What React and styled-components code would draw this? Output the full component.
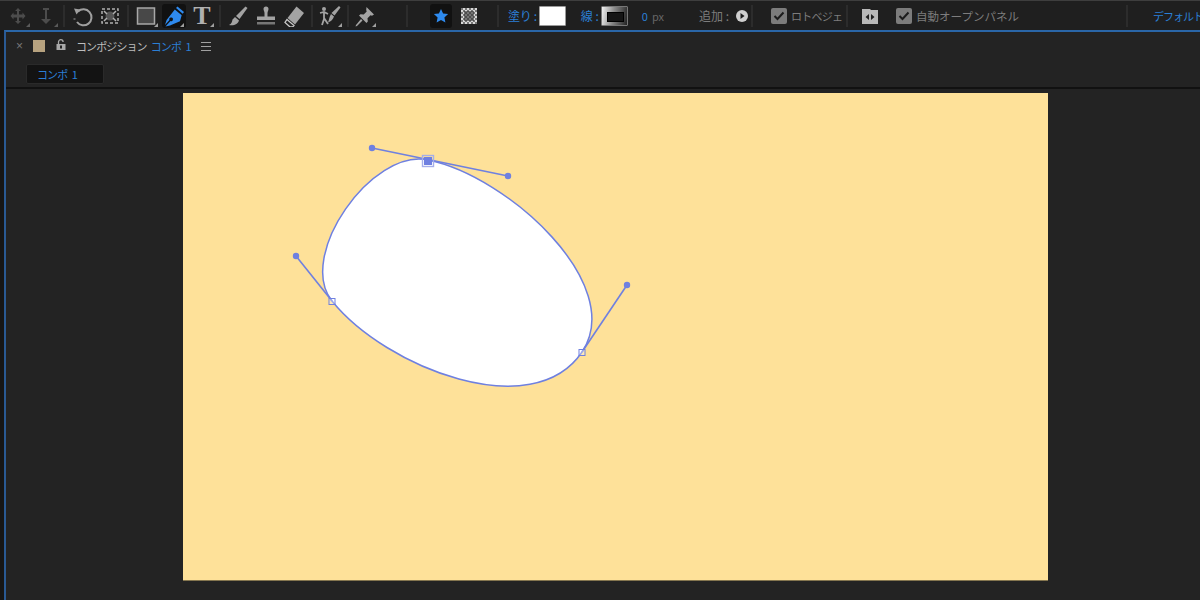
import React from "react";
import styled, { createGlobalStyle } from "styled-components";

const Global = createGlobalStyle`
  html, body { margin: 0; padding: 0; background: #232323; }
  * { box-sizing: border-box; }
`;

const FONT = `"Noto Sans CJK JP", "Noto Sans", sans-serif`;
const BLUE = "#2b7fd6";

const Root = styled.div`
  width: 1200px;
  height: 600px;
  overflow: hidden;
  display: flex;
  flex-direction: column;
  background: #161616;
  font-family: ${FONT};
  border-top: 1px solid #3e3e3e;
`;

const Toolbar = styled.div`
  height: 29px;
  flex: none;
  display: flex;
  align-items: center;
  padding-left: 4px;
  background: #1f1f1f;
  white-space: nowrap;
  overflow: hidden;
`;

const Tool = styled.div`
  position: relative;
  width: ${(p) => p.$w || 28}px;
  height: 24px;
  flex: none;
  display: flex;
  align-items: center;
  justify-content: center;
  margin-left: ${(p) => p.$ml || 0}px;
  color: ${(p) => p.$color || "#a3a3a3"};
  &::after {
    content: "";
    display: ${(p) => (p.$corner ? "block" : "none")};
    position: absolute;
    right: 2px;
    bottom: 1px;
    width: 0;
    height: 0;
    border-style: solid;
    border-width: 0 0 4px 4px;
    border-color: transparent transparent ${(p) => (p.$dim ? "#5a5a5a" : "#a0a0a0")} transparent;
  }
`;

const ActiveTool = styled(Tool)`
  background: #111;
  border-radius: 3px;
  width: ${(p) => p.$w || 24}px;
  margin-left: ${(p) => p.$ml || 2}px;
  margin-right: ${(p) => p.$mr || 2}px;
`;

const Sep = styled.div`
  width: ${(p) => p.$w || 8}px;
  height: 22px;
  flex: none;
  margin-left: ${(p) => p.$ml || 0}px;
  display: flex;
  justify-content: center;
  &::before {
    content: "";
    width: 2px;
    height: 100%;
    background: #2c2c2c;
  }
`;

const Label = styled.span`
  flex: none;
  font-size: ${(p) => p.$size || 12}px;
  line-height: 16px;
  color: ${(p) => p.$color || "#7d7d7d"};
  margin-left: ${(p) => p.$ml || 0}px;
  letter-spacing: ${(p) => p.$ls || 0}px;
`;

const TypeTool = styled.span`
  font-family: "Liberation Serif", serif;
  font-size: 26px;
  line-height: 24px;
  font-weight: 700;
  color: #b0b0b0;
`;

const FillSwatch = styled.div`
  width: 27px;
  height: 20px;
  flex: none;
  margin-left: ${(p) => p.$ml || 0}px;
  background: #fff;
  border: 1px solid #9a9a9a;
  border-radius: 1px;
`;

const StrokeSwatch = styled.div`
  width: 27px;
  height: 20px;
  flex: none;
  margin-left: ${(p) => p.$ml || 0}px;
  padding: 5px 5px;
  border: 1px solid #777;
  border-radius: 1px;
  background: linear-gradient(100deg, #f2f2f2 0%, #8a8a8a 45%, #222 100%);
  &::before {
    content: "";
    display: block;
    width: 100%;
    height: 100%;
    background: #151515;
    border: 1px solid #000;
  }
`;

const Check = styled.div`
  width: 16px;
  height: 16px;
  flex: none;
  margin-left: ${(p) => p.$ml || 0}px;
  border-radius: 2px;
  background: #7c7c7c;
  display: flex;
  align-items: center;
  justify-content: center;
`;

const Workspace = styled.div`
  flex: 1;
  display: flex;
  padding-left: 4px;
  min-height: 0;
`;

const Panel = styled.div`
  flex: 1;
  display: flex;
  flex-direction: column;
  background: #232323;
  border-top: 2px solid #2a66a8;
  border-left: 2px solid #2a5a94;
  min-height: 0;
`;

const PanelHeader = styled.div`
  height: 28px;
  flex: none;
  display: flex;
  align-items: center;
  padding-left: 10px;
`;

const CloseMark = styled.span`
  font-family: "Liberation Sans", sans-serif;
  font-size: 12px;
  line-height: 16px;
  color: #777;
  width: 7px;
`;

const ColorChip = styled.div`
  width: 12px;
  height: 12px;
  flex: none;
  margin-left: 10px;
  background: #b7a27f;
`;

const LockBox = styled.div`
  width: 10px;
  height: 11px;
  flex: none;
  margin-left: 11px;
  margin-bottom: 4px;
  display: flex;
`;

const Title = styled.span`
  font-size: 11px;
  line-height: 16px;
  letter-spacing: -0.9px;
  word-spacing: 3px;
  color: ${(p) => p.$color || "#bdbdbd"};
  margin-left: ${(p) => p.$ml || 0}px;
`;

const Burger = styled.div`
  width: 10px;
  height: 9px;
  flex: none;
  margin-left: 10px;
  border-top: 1px solid #a0a0a0;
  border-bottom: 1px solid #a0a0a0;
  display: flex;
  align-items: center;
  &::before {
    content: "";
    display: block;
    width: 100%;
    height: 1px;
    background: #a0a0a0;
  }
`;

const TabRow = styled.div`
  height: 29px;
  flex: none;
  padding: 4px 0 0 20px;
  border-bottom: 2px solid #111;
`;

const Tab = styled.div`
  width: 78px;
  height: 20px;
  padding-left: 10px;
  background: #131313;
  border: 1px solid #2a2a2a;
  border-radius: 2px;
  font-size: 11px;
  line-height: 18px;
  letter-spacing: -0.9px;
  word-spacing: 3px;
  color: ${BLUE};
`;

const Viewer = styled.div`
  flex: 1;
  padding: 4px 0 0 177px;
  min-height: 0;
`;

const Comp = styled.div`
  width: 865px;
  height: 488px;
  background: #fee199;
  border-bottom: 1px solid #85764f;
`;

const Drawing = styled.svg`
  display: block;
`;

const Ico = ({ children, w = 22, h = 22 }) => (
  <svg width={w} height={h} viewBox={`0 0 ${w} ${h}`} fill="none">{children}</svg>
);

const Tick = () => (
  <svg width="12" height="10" viewBox="0 0 12 10" fill="none">
    <path d="M1.5 5l3 3L10.5 1.5" stroke="#1c1c1c" strokeWidth="2" />
  </svg>
);

const STROKE = "#6f80e0";

function Shape() {
  return (
    <Drawing width="865" height="487" viewBox="183 93 865 487">
      <path
        d="M428 160 C508 176 627 285 582 352 C533 425 386 368 332 301 C296 256 372 148 428 160Z"
        fill="#fff"
        stroke={STROKE}
        strokeWidth="1.5"
      />
      <g stroke={STROKE} strokeWidth="1.6" fill="none">
        <path d="M372 148L508 176" />
        <path d="M296 256L332 301" />
        <path d="M627 285L582 352" />
      </g>
      <g fill={STROKE}>
        <circle cx="372" cy="148" r="3.2" />
        <circle cx="508" cy="176" r="3.2" />
        <circle cx="296" cy="256" r="3.2" />
        <circle cx="627" cy="285" r="3.2" />
        <rect x="424" y="157" width="8" height="8" />
      </g>
      <rect x="422.5" y="155.5" width="11" height="11" fill="none" stroke="#a5aeea" strokeWidth="1.4" />
      <rect x="329" y="298.5" width="6" height="6" fill="#fff" fillOpacity=".3" stroke={STROKE} />
      <rect x="579" y="349.5" width="6" height="6" fill="#fff" fillOpacity=".3" stroke={STROKE} />
    </Drawing>
  );
}

export default function App() {
  return (
    <Root>
      <Global />
      <Toolbar>
        <Tool $corner $dim $color="#4c4c4c">
          <Ico>
            <path d="M11 3l3 3h-2v3.500H15.500V7.500l3 3.500-3 3.500v-2H12V16h2l-3 3-3-3h2v-3.500H6.500v2l-3-3.500 3-3.500v2H10V6H8z" fill="currentColor" />
          </Ico>
        </Tool>
        <Tool $corner $dim $color="#4c4c4c">
          <Ico>
            <path d="M8 4h6M11 4v12" stroke="currentColor" strokeWidth="2" />
            <path d="M6 14h10l-5 5z" fill="currentColor" />
          </Ico>
        </Tool>
        <Sep />
        <Tool $color="#a0a0a0">
          <Ico>
            <path d="M7 6.500A8 8 0 1 1 6 17" stroke="currentColor" strokeWidth="2" />
            <path d="M3 3.500l6.500 1-4 5z" fill="currentColor" />
            <path d="M3.500 13.500v1" stroke="currentColor" strokeWidth="2" />
          </Ico>
        </Tool>
        <Tool $color="#b0b0b0">
          <Ico>
            <rect x="3" y="4" width="16" height="14" stroke="currentColor" strokeWidth="1.500" strokeDasharray="3 2" />
            <circle cx="11" cy="11" r="4.500" fill="#555" />
            <path d="M5 6l3 3M17 6l-3 3M5 16l3-3M17 16l-3-3" stroke="currentColor" strokeWidth="1.500" />
          </Ico>
        </Tool>
        <Sep />
        <Tool $corner>
          <Ico>
            <rect x="2.500" y="3" width="17" height="16" fill="#484848" stroke="#a8a8a8" strokeWidth="1.500" />
          </Ico>
        </Tool>
        <ActiveTool $corner $color="#2e8aee">
          <Ico>
            <path d="M14.500 1.500l6.500 5.500-1.300 1.700-6.700-5.600z" fill="currentColor" />
            <path d="M11.800 4.500l6.900 5.700-1.700 6L7 20.500l-4.500 1 5-5.500a1.800 1.800 0 1 0-1-1L2 20l1.600-5z" fill="currentColor" />
          </Ico>
        </ActiveTool>
        <Tool $corner>
          <TypeTool>T</TypeTool>
        </Tool>
        <Sep />
        <Tool>
          <Ico>
            <path d="M18.500 1.500l2 1.500-8 11-3.500-3z" fill="currentColor" />
            <path d="M8 12l4 3.500c-1 3.500-5 5.500-10 4.500 2.500-1 3-3 3.500-5.500z" fill="currentColor" />
          </Ico>
        </Tool>
        <Tool>
          <Ico>
            <path d="M8.500 4a2.500 2.500 0 1 1 5 0c0 1.500-1 2.500-1 4v3.500H20V15H2v-3.500h7.500V8c0-1.500-1-2.500-1-4z" fill="currentColor" />
            <rect x="2" y="17" width="18" height="2.500" fill="#777" />
          </Ico>
        </Tool>
        <Tool>
          <Ico>
            <path d="M13.500 1.500l7.500 6.500-9 11.500-7.500-6.500z" fill="currentColor" />
            <path d="M4 14.500l7 6-1.200 1.300H6.800L2 17.500z" fill="none" stroke="#c8c8c8" strokeWidth="1.300" />
          </Ico>
        </Tool>
        <Sep />
        <Tool $corner>
          <Ico>
            <circle cx="5" cy="4" r="2" fill="currentColor" />
            <path d="M1 8l4-1 4 2M5 7v7l-2 6M5 13l4 6" stroke="currentColor" strokeWidth="1.800" />
            <path d="M20 1l1.500 1.500-6 8-3-2.500z" fill="currentColor" />
            <path d="M12 9l3 2.500c-1 3-3 5-6 6 1-2 1-5 3-8.500z" fill="currentColor" />
          </Ico>
        </Tool>
        <Sep />
        <Tool $corner $w={26}>
          <Ico>
            <path d="M12.500 2l7.500 7.500-2 1.300-1.500-.5-3 3 .3 3.200-1.300 1.500-7.500-7.500 1.500-1.300 3.200.3 3-3-.5-1.500z" fill="currentColor" />
            <path d="M7 14l1.500 1.500-5.500 5.500-1.500.5.500-1.500z" fill="currentColor" />
          </Ico>
        </Tool>
        <Sep $ml={25} />
        <ActiveTool $ml={19} $mr={3} $w={22} $color="#2e8aee">
          <Ico w={16} h={16}>
            <path d="M8 1l2.100 4.600 5 .5-3.700 3.400 1 4.900L8 12l-4.400 2.400 1-4.900L.9 6.100l5-.5z" fill="currentColor" />
          </Ico>
        </ActiveTool>
        <Tool $w={16} $ml={6}>
          <Ico w={16} h={16}>
            <defs>
              <pattern id="chk" width="4" height="4" patternUnits="userSpaceOnUse">
                <rect width="4" height="4" fill="#d8d8d8" />
                <rect width="2" height="2" fill="#777" />
                <rect x="2" y="2" width="2" height="2" fill="#777" />
              </pattern>
            </defs>
            <rect width="16" height="16" fill="url(#chk)" />
            <rect x="3" y="3" width="10" height="10" fill="#333" fillOpacity=".6" />
          </Ico>
        </Tool>
        <Sep $ml={17} />
        <Label $color={BLUE} $ml={6} $ls={-0.3}>塗り :</Label>
        <FillSwatch $ml={2} />
        <Label $color={BLUE} $ml={15}>線 :</Label>
        <StrokeSwatch $ml={2} />
        <Label $color={BLUE} $ml={14} $size={11}>0</Label>
        <Label $color="#666" $ml={4} $size={11}>px</Label>
        <Label $ml={35}>追加 :</Label>
        <Tool $w={12} $ml={7}>
          <Ico w={12} h={12}>
            <circle cx="6" cy="6" r="6" fill="#cfcfcf" />
            <path d="M4.500 3l4 3-4 3z" fill="#1c1c1c" />
          </Ico>
        </Tool>
        <Sep />
        <Check $ml={15}><Tick /></Check>
        <Label $ml={4} $size={11} $ls={-0.8}>ロトベジェ</Label>
        <Sep $ml={1} />
        <Tool $w={16} $ml={11}>
          <Ico w={16} h={16}>
            <path d="M0 1h8l1 1h7v14H0z" fill="#b9b9b9" />
            <path d="M7 6v6L3.500 9zM9 6v6l3.500-3z" fill="#222" />
          </Ico>
        </Tool>
        <Check $ml={18}><Tick /></Check>
        <Label $ml={4} $size={11.500}>自動オープンパネル</Label>
        <Sep $ml={104} />
        <Label $color={BLUE} $ml={22} $size={11} $ls={-1}>デフォルト</Label>
      </Toolbar>
      <Workspace>
        <Panel>
          <PanelHeader>
            <CloseMark>×</CloseMark>
            <ColorChip />
            <LockBox>
              <svg width="10" height="11" viewBox="0 0 10 11" fill="none">
                <path d="M2.500 5V3a2.300 2.300 0 0 1 4.600 0" stroke="#a8a8a8" strokeWidth="1.300" />
                <rect x="0.500" y="5" width="9" height="6" fill="#a8a8a8" />
                <rect x="4" y="6.500" width="2" height="3" fill="#232323" />
              </svg>
            </LockBox>
            <Title $ml={10}>コンポジション</Title>
            <Title $color={BLUE} $ml={4}>コンポ 1</Title>
            <Burger />
          </PanelHeader>
          <TabRow>
            <Tab>コンポ 1</Tab>
          </TabRow>
          <Viewer>
            <Comp>
              <Shape />
            </Comp>
          </Viewer>
        </Panel>
      </Workspace>
    </Root>
  );
}
